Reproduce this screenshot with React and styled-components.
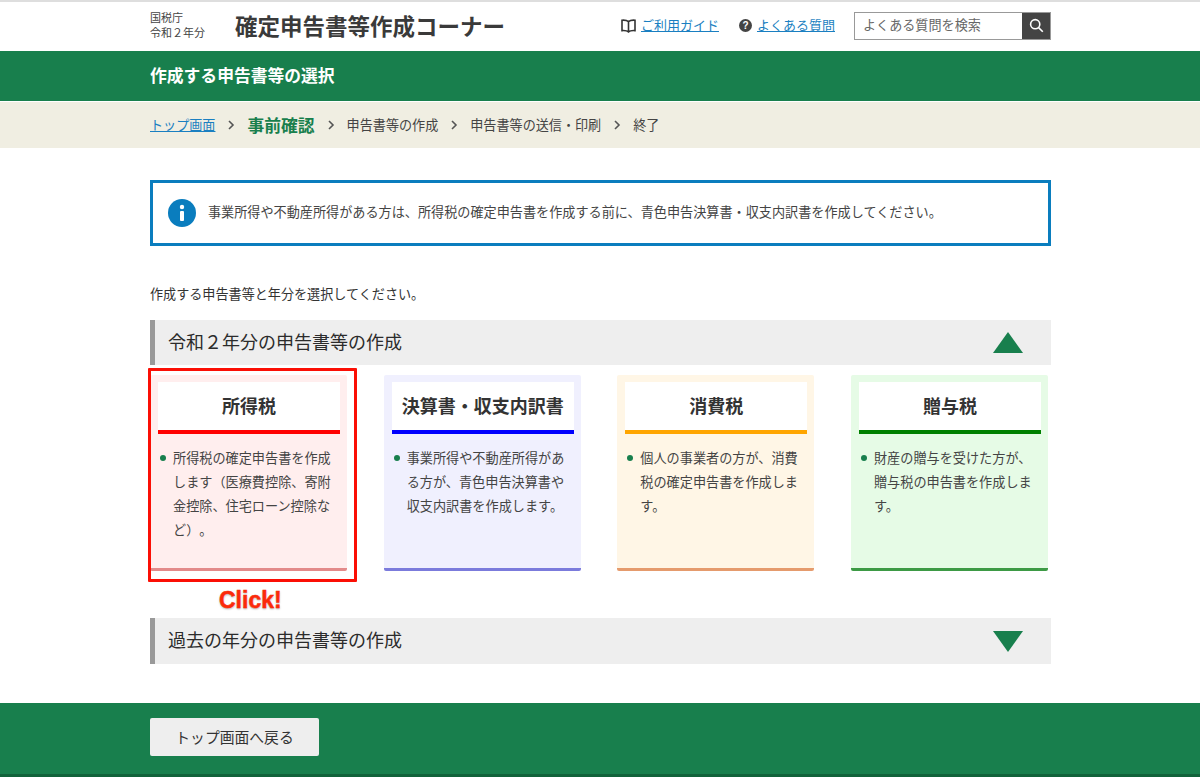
import React from 'react'
import styled, { createGlobalStyle } from 'styled-components'

const GlobalStyle = createGlobalStyle`
	html, body {
		margin: 0;
		padding: 0;
		background: #fff;
		color: #333;
		font-family: "Noto Sans CJK JP", "Liberation Sans", sans-serif;
		text-spacing-trim: space-all;
	}
`

const Page = styled.div`
	position: relative;
	width: 1200px;
	height: 777px;
	overflow: hidden;
	border-top: 2px solid #dedede;
	box-sizing: border-box;
`

const Container = styled.div`
	width: 901px;
	margin-left: 150px;
`

const Header = styled.header`
	height: 49px;
	background: #fff;
`

const HeaderInner = styled(Container)`
	display: flex;
	align-items: center;
	height: 100%;
`

const Agency = styled.div`
	width: 85px;
	padding-bottom: 3px;
	font-size: 11px;
	line-height: 15px;
	color: #444;
`

const SiteTitle = styled.div`
	padding-bottom: 3px;
	font-size: 22.5px;
	font-weight: 700;
	color: #3a3a3a;
	line-height: 30px;
`

const HeaderNav = styled.nav`
	margin-left: auto;
	display: flex;
	align-items: center;
	padding-bottom: 2px;
`

const NavItem = styled.div`
	display: flex;
	align-items: center;
	gap: 5px;
	margin-right: ${props => props.$gap}px;
	font-size: 13px;
`

const Link = styled.a`
	color: #1a7fc1;
	text-decoration: underline;
`

const NavLink = styled(Link)`
	padding-bottom: 2px;
`

const Search = styled.div`
	display: flex;
	width: 197px;
	height: 28px;
	border: 1px solid #999;
	box-sizing: border-box;
`

const SearchText = styled.div`
	flex: 1;
	padding-left: 8px;
	font-size: 13.1px;
	line-height: 24px;
	color: #666;
`

const SearchButton = styled.div`
	width: 28px;
	background: #444;
	display: flex;
	align-items: center;
	justify-content: center;
`

const TitleBar = styled.div`
	height: 50px;
	background: #187f4d;
	border-bottom: 1px solid #fff;
	display: flex;
	align-items: center;
`

const PageTitle = styled(Container)`
	padding-bottom: 3px;
	color: #fff;
	font-size: 16.8px;
	font-weight: 700;
`

const CrumbBar = styled.div`
	height: 46px;
	background: #f0eee2;
	display: flex;
	align-items: center;
`

const Crumbs = styled(Container)`
	display: flex;
	align-items: center;
	font-size: 13.1px;
	color: #444;
`

const CrumbLabel = styled.span`
	padding-bottom: 1px;
`

const CrumbCurrent = styled.span`
	padding-bottom: 1px;
	font-size: 16.8px;
	font-weight: 700;
	color: #187f4d;
`

const Chevron = styled.svg`
	width: 8px;
	height: 10px;
	margin: 0 12px;
	fill: none;
	stroke: #555;
	stroke-width: 1.6;
`

const Main = styled(Container)`
	padding-top: 32px;
`

const InfoBox = styled.div`
	height: 66px;
	box-sizing: border-box;
	border: 3px solid #0a7dbe;
	display: flex;
	align-items: center;
	padding-left: 15px;
	gap: 12px;
`

const InfoText = styled.span`
	padding-bottom: 4px;
	font-size: 13.13px;
	color: #444;
`

const Lead = styled.p`
	margin: 38px 0 16px;
	font-size: 13.1px;
	line-height: 20px;
	color: #333;
`

const AccordionHead = styled.div`
	height: ${props => props.$height}px;
	box-sizing: border-box;
	background: #eee;
	border-left: 5px solid #999;
	display: flex;
	align-items: center;
	justify-content: space-between;
	padding: 0 28px 0 13px;
`

const AccordionTitle = styled.span`
	padding-bottom: 4px;
	font-size: 18px;
	color: #2b2b2b;
`

const Arrow = styled.svg`
	width: 30px;
	height: 21px;
	fill: #187f4d;
`

const Cards = styled.div`
	display: grid;
	grid-template-columns: repeat(4, 197px);
	column-gap: 36.67px;
	margin: 10px 0 47px;
`

const Card = styled.div`
	height: 196px;
	box-sizing: border-box;
	padding: 7px 7px 0 8px;
	background: ${props => props.$bg};
	border-bottom: 3px solid ${props => props.$edge};
	border-radius: 2px;
`

const CardTitle = styled.div`
	height: 46px;
	padding-bottom: 2px;
	background: #fff;
	border-bottom: 4px solid ${props => props.$color};
	display: flex;
	align-items: center;
	justify-content: center;
	font-size: 18px;
	font-weight: 700;
	color: #333;
`

const CardText = styled.p`
	margin: 12px 0 0;
	padding: 0 0 0 15px;
	position: relative;
	font-size: 13.15px;
	line-height: 24px;
	color: #444;
	&::before {
		content: '';
		position: absolute;
		left: 2px;
		top: 9px;
		width: 6px;
		height: 6px;
		border-radius: 50%;
		background: #187f4d;
	}
`

const Footer = styled.footer`
	position: absolute;
	left: 0;
	right: 0;
	bottom: 0;
	height: 74px;
	box-sizing: border-box;
	padding-bottom: 3px;
	background: #187f4d;
	border-bottom: 3px solid #11623a;
	display: flex;
	align-items: center;
`

const BackButton = styled.div`
	width: 169px;
	height: 38px;
	background: #eee;
	border-radius: 2px;
	display: flex;
	align-items: center;
	justify-content: center;
	padding-bottom: 2px;
	box-sizing: border-box;
	font-size: 14.8px;
	color: #333;
`

const Highlight = styled.div`
	position: absolute;
	left: 148px;
	top: 366px;
	width: 209px;
	height: 214px;
	box-sizing: border-box;
	border: 3px solid #fb0f05;
	border-radius: 1px;
`

const ClickLabel = styled.div`
	position: absolute;
	left: 219px;
	top: 584px;
	font-family: "Liberation Sans", sans-serif;
	font-size: 23px;
	line-height: 28px;
	font-weight: 700;
	color: #fb2a0a;
	-webkit-text-stroke: 0.5px #fb2a0a;
	text-shadow: 0 0 2px #fff, 0 1px 2px rgba(0, 0, 0, 0.4);
`

const cards = [
	{ title: '所得税', color: '#ff0000', bg: '#ffeeee', edge: '#e38a8a', text: '所得税の確定申告書を作成します（医療費控除、寄附金控除、住宅ローン控除など）。' },
	{ title: '決算書・収支内訳書', color: '#0000ff', bg: '#f0f0fe', edge: '#7b7bdc', text: '事業所得や不動産所得がある方が、青色申告決算書や収支内訳書を作成します。' },
	{ title: '消費税', color: '#ffa500', bg: '#fff6e6', edge: '#e59b6d', text: '個人の事業者の方が、消費税の確定申告書を作成します。' },
	{ title: '贈与税', color: '#008000', bg: '#e6fbe6', edge: '#3d9a45', text: '財産の贈与を受けた方が、贈与税の申告書を作成します。' }
]

const ChevronIcon = () => (
	<Chevron viewBox="0 0 8 10">
		<path d="M2 1l4 4-4 4" />
	</Chevron>
)

const App = () => (
	<Page>
		<GlobalStyle />
		<Header>
			<HeaderInner>
				<Agency>
					国税庁
					<br />
					令和２年分
				</Agency>
				<SiteTitle>確定申告書等作成コーナー</SiteTitle>
				<HeaderNav>
					<NavItem $gap={20}>
						<svg width="15" height="14" viewBox="0 0 15 14" fill="none" stroke="#333" strokeWidth="1.6">
							<path d="M7.5 2.6C6 1.3 3.8 1 1 1.2v10.4c2.8-.2 5 0 6.5 1.3 1.5-1.3 3.7-1.5 6.5-1.3V1.2C11.2 1 9 1.3 7.5 2.6zM7.5 2.6v10.3" />
						</svg>
						<NavLink>ご利用ガイド</NavLink>
					</NavItem>
					<NavItem $gap={19}>
						<svg width="13" height="13" viewBox="0 0 13 13">
							<circle cx="6.5" cy="6.5" r="6.5" fill="#444" />
							<text x="6.5" y="10" textAnchor="middle" fontSize="10" fontWeight="700" fill="#fff" fontFamily="Liberation Sans">?</text>
						</svg>
						<NavLink>よくある質問</NavLink>
					</NavItem>
					<Search>
						<SearchText>よくある質問を検索</SearchText>
						<SearchButton>
							<svg width="15" height="15" viewBox="0 0 15 15" fill="none" stroke="#fff" strokeWidth="1.6">
								<circle cx="6.2" cy="6.2" r="4.6" />
								<path d="M9.6 9.6l4.2 4.2" />
							</svg>
						</SearchButton>
					</Search>
				</HeaderNav>
			</HeaderInner>
		</Header>
		<TitleBar>
			<PageTitle>作成する申告書等の選択</PageTitle>
		</TitleBar>
		<CrumbBar>
			<Crumbs>
				<CrumbLabel>
					<Link>トップ画面</Link>
				</CrumbLabel>
				<ChevronIcon />
				<CrumbCurrent>事前確認</CrumbCurrent>
				<ChevronIcon />
				<CrumbLabel>申告書等の作成</CrumbLabel>
				<ChevronIcon />
				<CrumbLabel>申告書等の送信・印刷</CrumbLabel>
				<ChevronIcon />
				<CrumbLabel>終了</CrumbLabel>
			</Crumbs>
		</CrumbBar>
		<Main>
			<InfoBox>
				<svg width="28" height="28" viewBox="0 0 28 28">
					<circle cx="14" cy="14" r="14" fill="#0a7dbe" />
					<circle cx="14" cy="8" r="2.2" fill="#fff" />
					<rect x="12" y="12" width="4" height="10" rx="1" fill="#fff" />
				</svg>
				<InfoText>事業所得や不動産所得がある方は、所得税の確定申告書を作成する前に、青色申告決算書・収支内訳書を作成してください。</InfoText>
			</InfoBox>
			<Lead>作成する申告書等と年分を選択してください。</Lead>
			<AccordionHead $height={45}>
				<AccordionTitle>令和２年分の申告書等の作成</AccordionTitle>
				<Arrow viewBox="0 0 30 21">
					<path d="M15 0l15 21H0z" />
				</Arrow>
			</AccordionHead>
			<Cards>
				{cards.map(card => (
					<Card key={card.title} $bg={card.bg} $edge={card.edge}>
						<CardTitle $color={card.color}>{card.title}</CardTitle>
						<CardText>{card.text}</CardText>
					</Card>
				))}
			</Cards>
			<AccordionHead $height={46}>
				<AccordionTitle>過去の年分の申告書等の作成</AccordionTitle>
				<Arrow viewBox="0 0 30 21">
					<path d="M0 0h30L15 21z" />
				</Arrow>
			</AccordionHead>
		</Main>
		<Footer>
			<Container>
				<BackButton>トップ画面へ戻る</BackButton>
			</Container>
		</Footer>
		<Highlight />
		<ClickLabel>Click!</ClickLabel>
	</Page>
)

export default App
